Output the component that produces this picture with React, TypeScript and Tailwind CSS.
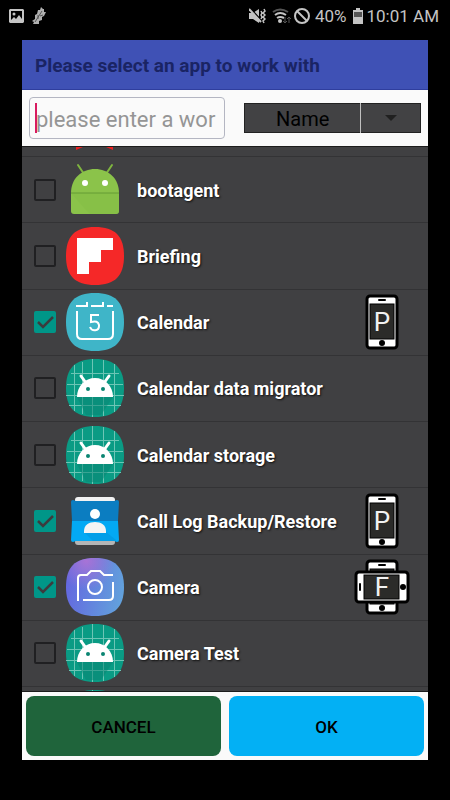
import React from "react";

type AppRow = {
  name: string;
  icon: React.ReactNode;
  checked?: boolean;
  mode?: "P" | "F";
};

const SQUIRCLE = "M29 0C49 0 58 9 58 29S49 58 29 58 0 49 0 29 9 0 29 0Z";

const iconClass = "block h-[58px] w-[58px] shrink-0";

const BootIcon = () => (
  <svg viewBox="0 0 58 58" className={iconClass}>
    <path d="M12 4l6 9M46 4l-6 9" stroke="#7fb53f" strokeWidth="2" strokeLinecap="round" />
    <path d="M5 32C5 17 16 8 29 8s24 9 24 24Z" fill="#8bc34a" />
    <path d="M5 32h48v18q0 3-3 3H8q-3 0-3-3Z" fill="#8bc34a" />
    <path d="M5 32l14 16 5 5h26q3 0 3-3V32Z" fill="#84bd44" opacity=".5" />
    <path d="M5 32h48" stroke="#659b35" />
    <circle cx="19" cy="22" r="3" fill="#fff" />
    <circle cx="39" cy="22" r="3" fill="#fff" />
  </svg>
);

const BriefingIcon = () => (
  <svg viewBox="0 0 58 58" className={iconClass}>
    <path d={SQUIRCLE} fill="#f52828" />
    <path d="M11 11h36v12H35v12H23v12H11Z" fill="#fff" />
  </svg>
);

const CalendarIcon = () => (
  <svg viewBox="0 0 58 58" className={iconClass}>
    <path d={SQUIRCLE} fill="#3fb5c8" />
    <g fill="none" stroke="#fff" strokeWidth="2">
      <path d="M10 13h11V9M25 13h12V9M41 13h6" />
      <path d="M11 18v23q0 5 5 5h26q5 0 5-5V18" />
      <path d="M33 22h-8v7q7-2 8 3v1c0 5-7 6-9 1" />
    </g>
  </svg>
);

const AndroidIcon = () => (
  <svg viewBox="0 0 58 58" className={iconClass}>
    <path d={SQUIRCLE} fill="#0a9b84" />
    <path
      d="M16.5 3v52M26.5 0v58M37.5 1v56M48.5 5v48M8.5 6v46M5 14.5h48M1 25.5h56M0 36.5h58M3 46.5h52"
      stroke="#6cc5b5"
      strokeWidth="1"
      fill="none"
    />
    <path d="M11 38l9 18h15l12-18Z" fill="#078371" opacity=".5" />
    <path d="M15 17l5 7M43 17l-5 7" stroke="#fff" strokeWidth="3" strokeLinecap="round" />
    <path d="M11 38C11 27 19 19 29 19s18 8 18 19Z" fill="#fff" />
    <circle cx="22" cy="30" r="2" fill="#0a8572" />
    <circle cx="37" cy="30" r="2" fill="#0a8572" />
  </svg>
);

const CallLogIcon = () => (
  <svg viewBox="0 0 58 58" className={iconClass}>
    <path d="M9 8q0-3 3-3h34q3 0 3 3v4H9Z" fill="#f2f2f2" />
    <path d="M9 46h40v4q0 3-3 3H12q-3 0-3-3Z" fill="#b5b5b5" />
    <path d="M5 10q0-2 2-2l3 1h38l3-1q2 0 2 2l-1 19H6Z" fill="#0b7dc1" />
    <path d="M6 29h46l1 19q0 2-2 2l-3-1H10l-3 1q-2 0-2-2Z" fill="#03a9f4" />
    <path d="M18 40l9 9h21l2-1-10-8Z" fill="#0294dc" opacity=".5" />
    <circle cx="29" cy="22" r="5" fill="#fff" />
    <path d="M18 41v-2c0-6 5-9 11-9s11 3 11 9v2Z" fill="#f4f4f4" />
  </svg>
);

const CameraIcon = () => (
  <svg viewBox="0 0 58 58" className={iconClass}>
    <defs>
      <linearGradient id="cam" x1="0" y1="0.4" x2="1" y2="0.6">
        <stop offset="0" stopColor="#6467e0" />
        <stop offset="1" stopColor="#62a2dc" />
      </linearGradient>
      <radialGradient id="camTop" cx=".35" cy=".05" r=".5">
        <stop offset="0" stopColor="#a873d6" />
        <stop offset="1" stopColor="#a873d6" stopOpacity="0" />
      </radialGradient>
    </defs>
    <path d={SQUIRCLE} fill="url(#cam)" />
    <path d={SQUIRCLE} fill="url(#camTop)" />
    <g fill="none" stroke="#fff" strokeWidth="2">
      <path d="M12 43V20q0-3 3-3h6l4-4h9l4 4h9" />
      <path d="M47 24v14q0 4-4 4H17" />
      <circle cx="29" cy="29" r="7" />
    </g>
  </svg>
);

const PartialIcon = () => (
  <svg viewBox="0 0 58 10" className="block h-[10px] w-[58px]">
    <path d="M10 0h7l-7 3ZM47 0h-7l7 3Z" fill="#ee2020" />
  </svg>
);

const PhoneBody = () => (
  <>
    <rect x="13" y="2" width="30" height="52" rx="3" fill="#fff" stroke="#000" strokeWidth="3" />
    <rect x="24" y="5" width="8" height="2" rx="1" fill="#000" />
    <rect x="16" y="10" width="24" height="35" fill="#2b2b29" stroke="#000" />
    <circle cx="28" cy="49" r="3" fill="#000" />
  </>
);

const ModeIcon = ({ mode }: { mode: "P" | "F" }) => (
  <svg viewBox="0 0 56 56" className="block h-14 w-14 shrink-0">
    <PhoneBody />
    {mode === "F" && (
      <g transform="rotate(-90 28 28)">
        <PhoneBody />
      </g>
    )}
    <text
      x="28"
      y="37"
      textAnchor="middle"
      fontSize="26"
      fill="#f2f2f2"
      fontFamily="Roboto, sans-serif"
    >
      {mode}
    </text>
  </svg>
);

const rows: AppRow[] = [
  { name: "bootagent", icon: <BootIcon /> },
  { name: "Briefing", icon: <BriefingIcon /> },
  { name: "Calendar", icon: <CalendarIcon />, checked: true, mode: "P" },
  { name: "Calendar data migrator", icon: <AndroidIcon /> },
  { name: "Calendar storage", icon: <AndroidIcon /> },
  { name: "Call Log Backup/Restore", icon: <CallLogIcon />, checked: true, mode: "P" },
  { name: "Camera", icon: <CameraIcon />, checked: true, mode: "F" },
  { name: "Camera Test", icon: <AndroidIcon /> },
];

const StatusBar = () => (
  <div className="flex h-8 shrink-0 items-center justify-between pl-[9px] pr-[11px] text-[#c4c4c4]">
    <div className="flex items-center gap-2">
      <svg viewBox="0 0 15 14" className="h-[14px] w-[15px]">
        <path
          fillRule="evenodd"
          fill="currentColor"
          d="M1 0h13l1 1v12l-1 1H1l-1-1V1ZM2 2v9l3-3 2 2 3-4 3 4V2Z"
        />
        <circle cx="5" cy="5" r="1.5" fill="currentColor" />
      </svg>
      <svg viewBox="0 0 15 18" className="h-[18px] w-[15px]">
        <path d="M9 0l2 2 1 0v3l2 0-2 4-2 1 0 3-3 1v3H1l1-2-2-1 3-2 0-4 2-1 1-4 2 0Z" fill="#b0b0b0" />
        <path d="M10 4L3 15M6 8l0 4M11 8l-3 1" stroke="#555" fill="none" />
      </svg>
    </div>
    <div className="flex items-center">
      <svg viewBox="0 0 17 16" className="mr-[6px] h-4 w-[17px]">
        <path d="M0 5h4l6-4v14l-6-4H0Z" fill="currentColor" />
        <path d="M1 0l12 13" stroke="#000" strokeWidth="1.5" />
        <path d="M0 1l12 13" stroke="currentColor" strokeWidth="2" />
        <path
          d="M12 3l1 2-1 2 1 2-1 2M15 1l1 2-2 2 2 2-2 2 2 2-2 2 1 2"
          stroke="currentColor"
          strokeWidth="1.5"
          fill="none"
        />
      </svg>
      <svg viewBox="0 0 20 16" className="mr-[2px] h-4 w-5">
        <g fill="none" stroke="currentColor" strokeWidth="2">
          <path d="M1 4Q8-1 16 4" stroke="#555" />
          <path d="M3 7Q8 3 14 7M5 10q3-2 7 0" />
        </g>
        <circle cx="8" cy="13" r="2" fill="currentColor" />
        <path d="M13 9v6m-2-2l2 2 2-2M17 15V9m-2 2l2-2 2 2" stroke="#555" fill="none" />
      </svg>
      <svg viewBox="0 0 16 16" className="mr-[5px] h-4 w-4">
        <circle cx="8" cy="8" r="7" fill="none" stroke="currentColor" strokeWidth="2" />
        <path d="M3 3l10 10" stroke="currentColor" strokeWidth="2" />
      </svg>
      <span className="text-[17px] leading-5">40%</span>
      <svg viewBox="0 0 10 16" className="ml-[6px] mr-1 h-4 w-[10px]">
        <path d="M3 0h4v2h3v14H0V2h3Z" fill="currentColor" />
        <path d="M1 4h8v5H1Z" fill="#555" />
      </svg>
      <span className="text-[17px] leading-5">10:01 AM</span>
    </div>
  </div>
);

const Row = ({ name, icon, checked, mode }: AppRow) => (
  <li className="min-h-0 flex-1 border-b border-[#333335]">
    <label className="flex h-full items-center pl-3 pr-[18px]">
      <span className="relative mr-[10px] h-[22px] w-[22px] shrink-0">
        <input
          type="checkbox"
          defaultChecked={checked}
          className="peer block h-[22px] w-[22px] appearance-none rounded-[2px] border-2 border-[#202022] checked:border-[#009688] checked:bg-[#009688]"
        />
        <svg
          viewBox="0 0 22 22"
          className="pointer-events-none absolute inset-0 hidden h-[22px] w-[22px] peer-checked:block"
        >
          <path d="M4 11l5 5L19 6" fill="none" stroke="#3c3c3e" strokeWidth="2.5" />
        </svg>
      </span>
      {icon}
      <span className="ml-[13px] flex-1 pt-[2px] text-[18px] leading-6 font-bold text-white [text-shadow:1px_1px_2px_#111]">
        {name}
      </span>
      {mode && <ModeIcon mode={mode} />}
    </label>
  </li>
);

const App = () => {
  return (
    <div className="flex h-screen min-h-[640px] flex-col bg-black pb-10 font-['Roboto',sans-serif]">
      <StatusBar />
      <main className="mx-[22px] mt-2 flex min-h-0 flex-1 flex-col bg-[#fafafa]">
        <h1 className="flex h-[50px] shrink-0 items-center border-b border-[#2f3e9e] bg-[#3f51b5] px-[13px] pt-[2px] text-[19px] leading-6 font-bold text-[#1a2464]">
          Please select an app to work with
        </h1>

        <div className="flex h-14 shrink-0 items-center justify-between px-[7px]">
          <div className="relative w-[196px]">
            <input
              type="text"
              aria-label="Search"
              placeholder="please enter a wor"
              className="block h-[42px] w-full rounded-[4px] border border-[#b4b6c2] bg-[#fafafa] px-[6px] pt-[2px] text-[22px] placeholder:text-[#959595]"
            />
            <span className="absolute left-[6px] top-[6px] h-[30px] w-[2px] bg-[#d81b60]" />
          </div>
          <div className="relative w-[177px]">
            <select
              aria-label="Sort by"
              className="block h-[30px] w-full appearance-none border border-[#222] bg-[#424244] pl-[31px] pr-[60px] pt-[2px] text-[20px] leading-6 text-black"
            >
              <option>Name</option>
            </select>
            <span className="pointer-events-none absolute inset-y-0 right-0 flex w-[61px] items-center justify-center border-l border-[#c0c0c0]">
              <svg viewBox="0 0 12 6" className="h-[6px] w-3">
                <path d="M0 0h12L6 6Z" fill="#202020" />
              </svg>
            </span>
          </div>
        </div>

        <ul className="flex min-h-0 flex-1 flex-col overflow-hidden bg-[#404042]">
          <li className="h-[11px] shrink-0 overflow-hidden border-y border-t-[#1c1c1c] border-b-[#333335] pl-11">
            <PartialIcon />
          </li>
          {rows.map((row) => (
            <Row key={row.name} {...row} />
          ))}
          <li className="h-[5px] shrink-0 overflow-hidden border-b border-[#1c1c1c] pl-11 pt-[3px]">
            <AndroidIcon />
          </li>
        </ul>

        <div className="grid shrink-0 grid-cols-2 gap-2 p-1 text-[17px] leading-6 font-medium">
          <button type="button" className="h-[60px] rounded-lg bg-[#1f643b] pt-[2px] text-black">
            CANCEL
          </button>
          <button type="button" className="h-[60px] rounded-lg bg-[#03b0f4] pt-[2px] text-black">
            OK
          </button>
        </div>
      </main>
    </div>
  );
};

export default App;
